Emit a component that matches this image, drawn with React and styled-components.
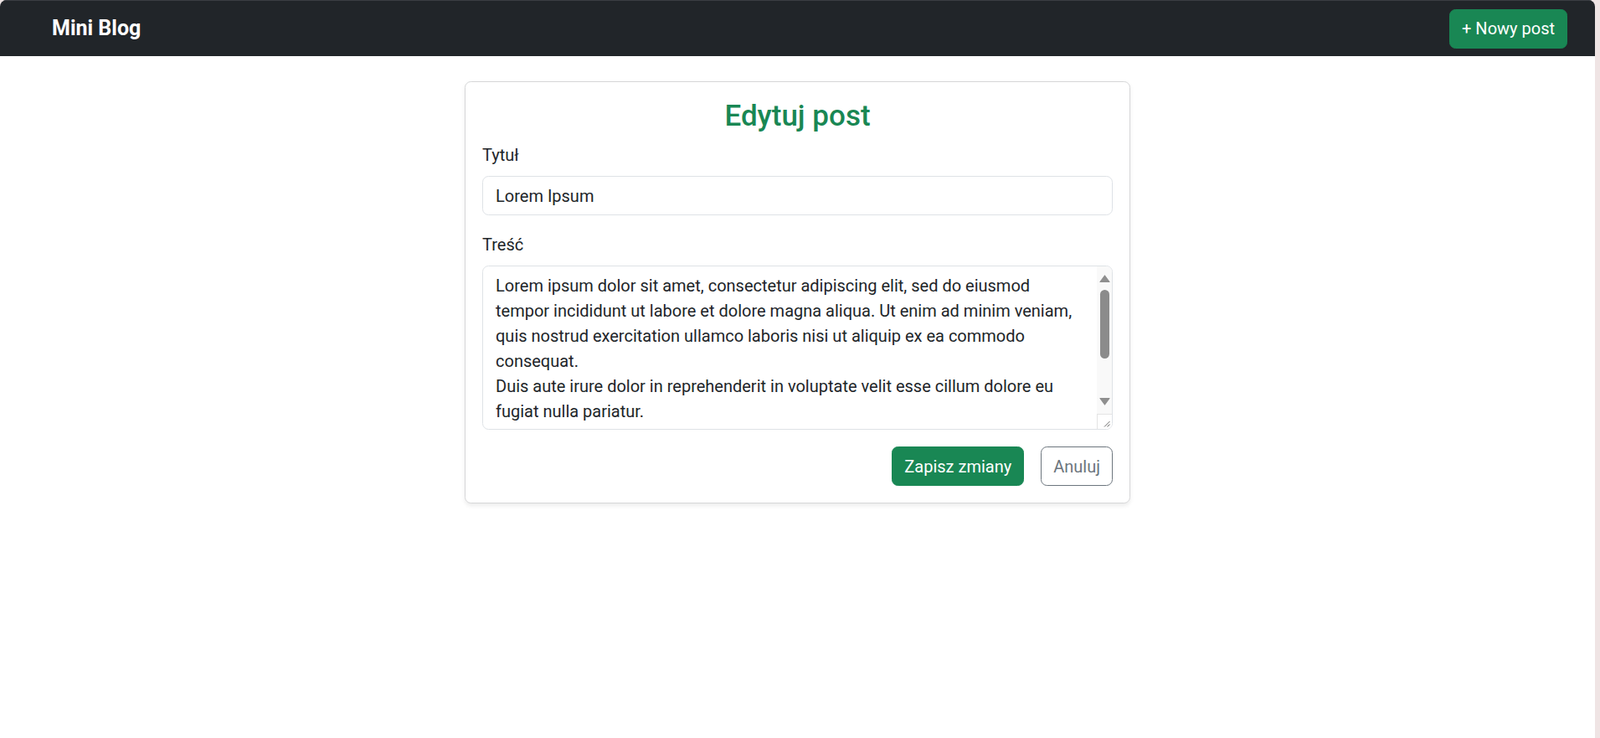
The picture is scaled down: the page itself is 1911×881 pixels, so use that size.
import React from 'react'
import styled, { createGlobalStyle } from 'styled-components'

const GlobalStyle = createGlobalStyle`
  html, body {
    margin: 0;
    padding: 0;
    background: #efe4e4;
  }
  body {
    font-family: Roboto, "Liberation Sans", Arial, sans-serif;
    color: #212529;
  }
  *, *::before, *::after {
    box-sizing: border-box;
  }
`

const Window = styled.div`
  margin-right: 6px;
  min-height: 100vh;
  background: #fff;
  border-radius: 8px 8px 0 0;
  overflow: hidden;
`

const Navbar = styled.nav`
  display: flex;
  align-items: center;
  justify-content: space-between;
  height: 67px;
  padding: 10px 33px 10px 62px;
  background: #212529;
  border-top: 1px solid #3b3e43;
`

const Brand = styled.a`
  color: #fff;
  font-size: 25px;
  font-weight: 700;
  line-height: 1.5;
  text-decoration: none;
`

const Button = styled.button`
  font-family: inherit;
  font-size: 20px;
  line-height: 1.5;
  padding: 7.5px 14px;
  border-radius: 7.5px;
  border: 1px solid ${p => p.$variant === 'outline' ? '#6c757d' : '#198754'};
  background: ${p => p.$variant === 'outline' ? 'transparent' : '#198754'};
  color: ${p => p.$variant === 'outline' ? '#6c757d' : '#fff'};
  cursor: pointer;
`

const Main = styled.main`
  padding-top: 30px;
`

const Card = styled.form`
  width: 795px;
  margin: 0 auto;
  padding: 20px;
  border: 1px solid #d6d7d8;
  border-radius: 7.5px;
  box-shadow: 0 2.5px 5px rgba(0, 0, 0, 0.075);
  background: #fff;
`

const Title = styled.h3`
  margin: 0 0 10px;
  font-size: 35px;
  font-weight: 500;
  line-height: 1.2;
  color: #198754;
  text-align: center;
`

const Field = styled.div`
  margin-bottom: 20px;
`

const Label = styled.label`
  display: block;
  margin-bottom: 10px;
  font-size: 20px;
  line-height: 1.5;
`

const fieldBase = `
  display: block;
  width: 100%;
  padding: 7.5px 15px;
  font-family: inherit;
  font-size: 20px;
  line-height: 1.5;
  color: #212529;
  background: #fff;
  border: 1px solid #dee2e6;
  border-radius: 7.5px;
  outline: none;
`

const Input = styled.input`
  ${fieldBase}
`

const TextWrap = styled.div`
  position: relative;
`

const TextArea = styled.textarea`
  ${fieldBase}
  height: 196px;
  padding-right: 33px;
  overflow: hidden;
  resize: none;
`

// drawn scrollbar that sits over the textarea's right edge
const Scrollbar = styled.div`
  position: absolute;
  top: 1px;
  right: 1px;
  bottom: 1px;
  width: 18px;
  display: flex;
  flex-direction: column;
  background: #f9f9f9;
  border-radius: 0 6.5px 6.5px 0;
  overflow: hidden;
`

const ArrowBtn = styled.div`
  height: 28px;
  display: flex;
  justify-content: center;
  align-items: ${p => p.$down ? 'flex-start' : 'flex-end'};
  padding: ${p => p.$down ? '8px 0 0' : '0 0 8px'};
`

const Track = styled.div`
  flex: 1;
  display: flex;
  justify-content: center;
`

const Thumb = styled.div`
  width: 11px;
  height: 82px;
  border-radius: 6px;
  background: #8b8b8b;
`

const Corner = styled.div`
  height: 18px;
  background: #fff;
  border-top: 1px solid #e4e4e4;
  border-left: 1px solid #e4e4e4;
  display: flex;
  align-items: flex-end;
  justify-content: flex-end;
  padding: 0 2px 2px 0;
`

const Triangle = ({ down }) => (
  <svg width="13" height="10" viewBox="0 0 13 10">
    <path d={down ? 'M1 1.5 H12 L6.5 9 Z' : 'M1 8.5 H12 L6.5 1 Z'} fill="#8f8f8f" stroke="#8f8f8f" strokeWidth="1.2" strokeLinejoin="round" />
  </svg>
)

const Grip = () => (
  <svg width="9" height="9" viewBox="0 0 9 9">
    <path d="M8.5 2 L2 8.5 M8.5 5.5 L5.5 8.5" stroke="#6a6a6a" strokeWidth="1" fill="none" />
  </svg>
)

const Actions = styled.div`
  display: flex;
  justify-content: flex-end;
  gap: 20px;
`

const content = `Lorem ipsum dolor sit amet, consectetur adipiscing elit, sed do eiusmod tempor incididunt ut labore et dolore magna aliqua. Ut enim ad minim veniam, quis nostrud exercitation ullamco laboris nisi ut aliquip ex ea commodo consequat.
Duis aute irure dolor in reprehenderit in voluptate velit esse cillum dolore eu fugiat nulla pariatur.
Excepteur sint occaecat cupidatat non proident, sunt in culpa qui officia deserunt mollit anim id est laborum.`

export default function App() {
  return (
    <>
      <GlobalStyle />
      <Window>
        <Navbar>
          <Brand href="#">Mini Blog</Brand>
          <Button type="button">+ Nowy post</Button>
        </Navbar>
        <Main>
          <Card onSubmit={e => e.preventDefault()}>
            <Title>Edytuj post</Title>
            <Field>
              <Label htmlFor="title">Tytuł</Label>
              <Input id="title" defaultValue="Lorem Ipsum" />
            </Field>
            <Field>
              <Label htmlFor="body">Treść</Label>
              <TextWrap>
                <TextArea id="body" defaultValue={content} />
                <Scrollbar aria-hidden="true">
                  <ArrowBtn><Triangle /></ArrowBtn>
                  <Track><Thumb /></Track>
                  <ArrowBtn $down><Triangle down /></ArrowBtn>
                  <Corner><Grip /></Corner>
                </Scrollbar>
              </TextWrap>
            </Field>
            <Actions>
              <Button type="submit">Zapisz zmiany</Button>
              <Button type="button" $variant="outline">Anuluj</Button>
            </Actions>
          </Card>
        </Main>
      </Window>
    </>
  )
}
